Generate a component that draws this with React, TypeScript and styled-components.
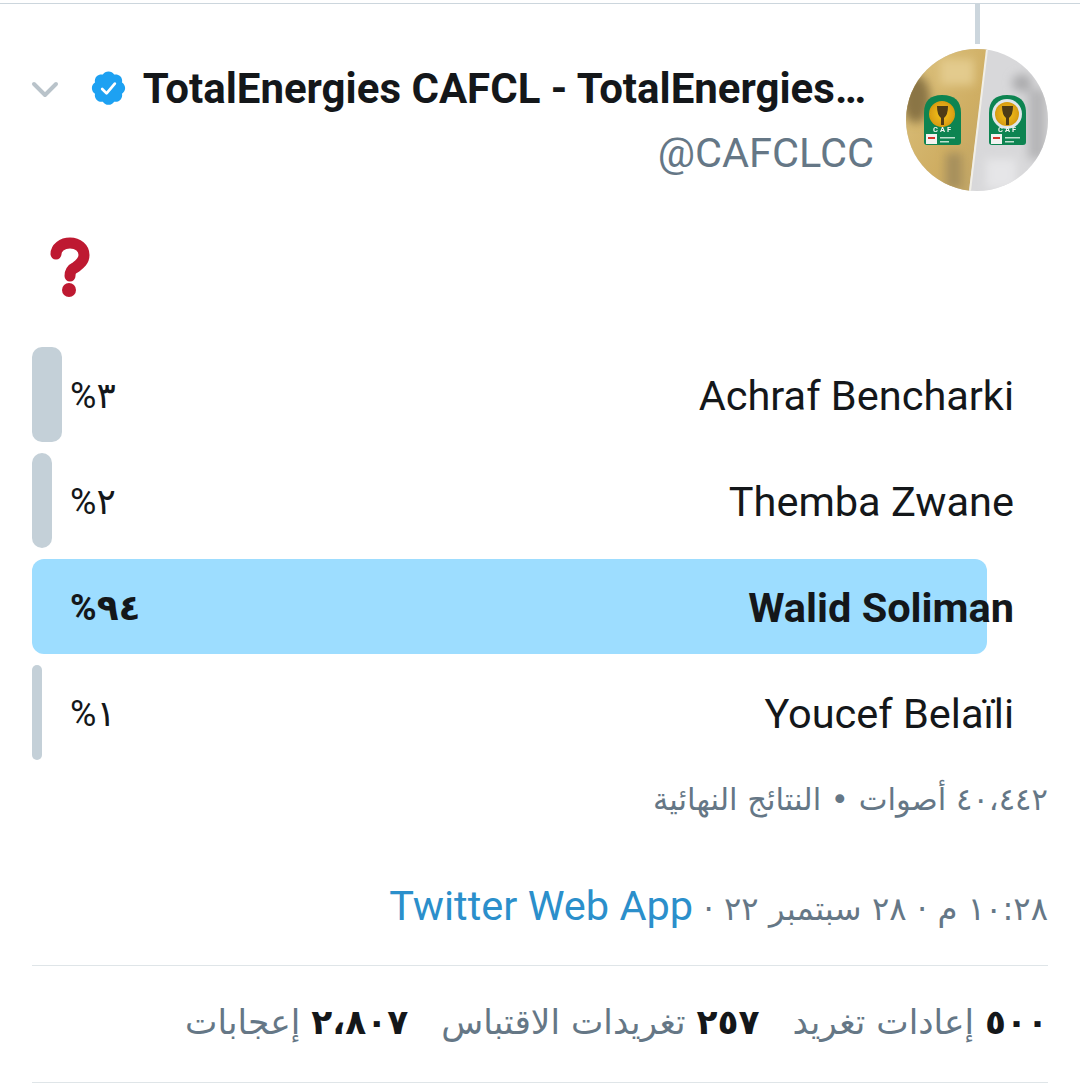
import React from "react";
import styled, { createGlobalStyle } from "styled-components";

const Global = createGlobalStyle`
  html, body { margin: 0; padding: 0; background: #fff; }
  body { font-family: Roboto, "DejaVu Sans", sans-serif; }
`;

const Page = styled.div`
  box-sizing: border-box;
  width: 1080px;
  height: 1087px;
  overflow: hidden;
  padding: 3px 32px 0;
  direction: rtl;
  position: relative;
  background: #fff;
`;

const TopRule = styled.div`
  height: 1px;
  margin: 0 -32px;
  background: #ccd6dd;
`;

const Thread = styled.div`
  width: 5px;
  height: 40px;
  margin-right: 68px;
  background: #ccd6dd;
`;

const Header = styled.header`
  display: flex;
  align-items: flex-start;
  margin-top: 5px;
  height: 142px;
`;

const AvatarBox = styled.div`
  flex: none;
  width: 142px;
  height: 142px;
  border-radius: 50%;
  overflow: hidden;
`;

const Identity = styled.div`
  flex: 1;
  min-width: 0;
  padding: 14px 40px 0 0;
  display: flex;
  flex-direction: column;
`;

const NameRow = styled.div`
  display: flex;
  align-items: center;
  height: 52px;
`;

const Name = styled.span`
  flex: none;
  direction: ltr;
  font: 700 42px/52px Roboto, sans-serif;
  color: #14171a;
  white-space: nowrap;
`;

const Handle = styled.span`
  margin-top: 15px;
  margin-right: -8px;
  direction: ltr;
  text-align: right;
  font: 400 41.5px/46px Roboto, sans-serif;
  color: #657786;
`;

const BadgeIcon = styled.svg`
  flex: none;
  width: 35px;
  height: 35px;
  margin-right: 17px;
  margin-top: -2px;
`;

const Chevron = styled.svg`
  flex: none;
  width: 28px;
  height: 18px;
  margin-right: 32px;
  margin-top: 2px;
`;

const Question = styled.svg`
  display: block;
  width: 42px;
  height: 62px;
  margin: 46px 957px 0 0;
`;

const Poll = styled.ul`
  list-style: none;
  margin: 48px 0 0;
  padding: 0;
  display: flex;
  flex-direction: column;
  gap: 11px;
`;

const Option = styled.li`
  position: relative;
  height: 95px;
  display: flex;
  align-items: center;
  justify-content: space-between;
  padding: 0 34px 0 38px;
`;

const Bar = styled.div<{ $lead?: boolean }>`
  position: absolute;
  left: 0;
  top: 0;
  bottom: 0;
  border-radius: ${(p) => (p.$lead ? "12px" : "10px")};
  background: ${(p) => (p.$lead ? "#9dddff" : "#c4d0d8")};
`;

const OptionName = styled.span<{ $lead?: boolean }>`
  position: relative;
  top: 1px;
  direction: ltr;
  font: ${(p) => (p.$lead ? 700 : 400)} 41.5px/46px Roboto, sans-serif;
  color: #14171a;
`;

const Percent = styled.span<{ $lead?: boolean }>`
  position: relative;
  top: 1px;
  font: ${(p) => (p.$lead ? 700 : 400)} 36px/46px Roboto, "DejaVu Sans", sans-serif;
  color: #14171a;
`;

const Summary = styled.p`
  margin: 17px 0 0;
  font: 400 30.6px/46px "DejaVu Sans", sans-serif;
  color: #657786;
`;

const Stamp = styled.p`
  margin: 60px 0 0;
  font: 400 32.3px/46px "DejaVu Sans", sans-serif;
  color: #657786;
`;

const Source = styled.span`
  font: 400 41.5px/46px Roboto, sans-serif;
  color: #2b8fcb;
`;

const RuleTop = styled.div`
  height: 1px;
  margin-top: 33px;
  background: #dfe5e8;
`;

const Divider = styled.div`
  height: 1px;
  background: #dfe5e8;
`;

const Stats = styled.div`
  box-sizing: border-box;
  height: 116px;
  padding-bottom: 4px;
  display: flex;
  align-items: center;
  gap: 33px;
  font: 400 34.4px/46px "DejaVu Sans", sans-serif;
  color: #657786;
  white-space: nowrap;
`;

const Count = styled.b`
  font-weight: 700;
  color: #14171a;
`;

const CafBadge = ({ x, ring }: { x: number; ring?: boolean }) => (
  <g transform={`translate(${x} 0)`}>
    <path d="M0 64 Q0 46 18 46 Q37 46 37 64 V93 Q37 96 34 96 H3 Q0 96 0 93 Z" fill="#0a8451" />
    {ring && <circle cx="18" cy="65" r="15" fill="#dfe6ea" />}
    <circle cx="18" cy="65" r={ring ? 12 : 13} fill="url(#cup)" />
    <path d="M13 57 H24 Q24 66 20 69 V76 H17 V69 Q13 66 13 57 Z" fill="#4d3a16" />
    <text x="19" y="83" textAnchor="middle" fontFamily="Roboto, sans-serif" fontWeight="700" fontSize="7.5" letterSpacing="2" fill="#f4f4f0">CAF</text>
    <rect x="2" y="85" width="11" height="10" fill="#f3f3f1" />
    <rect x="4" y="88" width="7" height="2" fill="#d4342a" />
    <rect x="16" y="88" width="15" height="1.5" fill="#bfe0cf" />
    <rect x="16" y="92" width="9" height="1.5" fill="#bfe0cf" />
  </g>
);

const Avatar = () => (
  <svg width="142" height="142" viewBox="0 0 142 142">
    <defs>
      <filter id="soft"><feGaussianBlur stdDeviation="5" /></filter>
      <filter id="fine"><feGaussianBlur stdDeviation="0.4" /></filter>
      <linearGradient id="gold" x1="0" y1="0" x2="1" y2="1">
        <stop offset="0" stopColor="#dcc27f" />
        <stop offset="0.6" stopColor="#cfae63" />
        <stop offset="1" stopColor="#bea468" />
      </linearGradient>
      <radialGradient id="cup" cx="0.5" cy="0.5" r="0.5">
        <stop offset="0" stopColor="#f6c51d" />
        <stop offset="1" stopColor="#d79b10" />
      </radialGradient>
    </defs>
    <rect width="142" height="142" fill="#d8d8da" />
    <polygon points="0,0 81,0 63,142 0,142" fill="url(#gold)" />
    <g filter="url(#soft)">
      <ellipse cx="10" cy="50" rx="14" ry="24" fill="#8a7445" />
      <rect x="34" y="10" width="34" height="26" fill="#e3cb8d" />
      <rect x="40" y="104" width="16" height="36" fill="#a68f5c" />
      <ellipse cx="116" cy="34" rx="10" ry="9" fill="#acacae" />
      <rect x="122" y="40" width="18" height="70" fill="#b6b6b8" />
      <rect x="80" y="110" width="30" height="30" fill="#e6e6e8" />
    </g>
    <polygon points="80,0 82,0 65,142 63,142" fill="#f1efe8" />
    <g filter="url(#fine)">
      <CafBadge x={18} />
      <CafBadge x={83} ring />
    </g>
  </svg>
);

const Verified = () => (
  <BadgeIcon viewBox="0 0 36 36">
    <path
      fill="#1da1f2"
      d="M18 0.5c2.5 0 4.6 1.3 5.8 3.2 2.2-.5 4.6.1 6.3 1.8 1.7 1.7 2.3 4.1 1.8 6.3 1.9 1.2 3.2 3.4 3.2 5.8s-1.3 4.6-3.2 5.8c.5 2.2-.1 4.6-1.8 6.3-1.7 1.7-4.1 2.3-6.3 1.8-1.2 1.9-3.3 3.2-5.8 3.2s-4.6-1.3-5.8-3.2c-2.2.5-4.6-.1-6.3-1.8-1.7-1.7-2.3-4.1-1.8-6.3C2.2 22.4.9 20.2.9 17.6s1.3-4.6 3.2-5.8c-.5-2.2.1-4.6 1.8-6.3 1.7-1.7 4.1-2.3 6.3-1.8C13.4 1.8 15.5.5 18 .5z"
    />
    <path d="M11.5 18.5l4.5 4.5 8.5-10" fill="none" stroke="#fff" strokeWidth="2.8" strokeLinecap="round" strokeLinejoin="round" />
  </BadgeIcon>
);

const options = [
  { name: "Achraf Bencharki", pct: "٣%", width: 30 },
  { name: "Themba Zwane", pct: "٢%", width: 20 },
  { name: "Walid Soliman", pct: "٩٤%", width: 955, lead: true },
  { name: "Youcef Belaïli", pct: "١%", width: 10 },
];

export default function App() {
  return (
    <Page>
      <Global />
      <TopRule />
      <Thread />
      <Header>
        <AvatarBox>
          <Avatar />
        </AvatarBox>
        <Identity>
          <NameRow>
            <Name>TotalEnergies CAFCL - TotalEnergies…</Name>
            <Verified />
            <Chevron viewBox="0 0 28 18">
              <path d="M3 3l11 11L25 3" fill="none" stroke="#b9c3ca" strokeWidth="4" strokeLinecap="round" strokeLinejoin="round" />
            </Chevron>
          </NameRow>
          <Handle>@CAFCLCC</Handle>
        </Identity>
      </Header>
      <Question viewBox="0 0 42 62" aria-label="question mark">
        <path
          d="M7 17c0-6 6-11 14-11s14 5 14 12c0 6-4 9-8 12-4 2-6 4-6 9"
          fill="none"
          stroke="#be1931"
          strokeWidth="11"
          strokeLinecap="round"
          strokeLinejoin="round"
        />
        <circle cx="20" cy="53" r="7" fill="#be1931" />
      </Question>
      <Poll>
        {options.map((o) => (
          <Option key={o.name}>
            <Bar $lead={o.lead} style={{ width: o.width }} />
            <OptionName $lead={o.lead}>{o.name}</OptionName>
            <Percent $lead={o.lead}>{o.pct}</Percent>
          </Option>
        ))}
      </Poll>
      <Summary>٤٠،٤٤٢ أصوات • النتائج النهائية</Summary>
      <Stamp>
        ١٠:٢٨ م · ٢٨ سبتمبر ٢٢ · <Source>Twitter Web App</Source>
      </Stamp>
      <RuleTop />
      <Stats>
        <span><Count>٥٠٠</Count> إعادات تغريد</span>
        <span><Count>٢٥٧</Count> تغريدات الاقتباس</span>
        <span><Count>٢،٨٠٧</Count> إعجابات</span>
      </Stats>
      <Divider />
    </Page>
  );
}
